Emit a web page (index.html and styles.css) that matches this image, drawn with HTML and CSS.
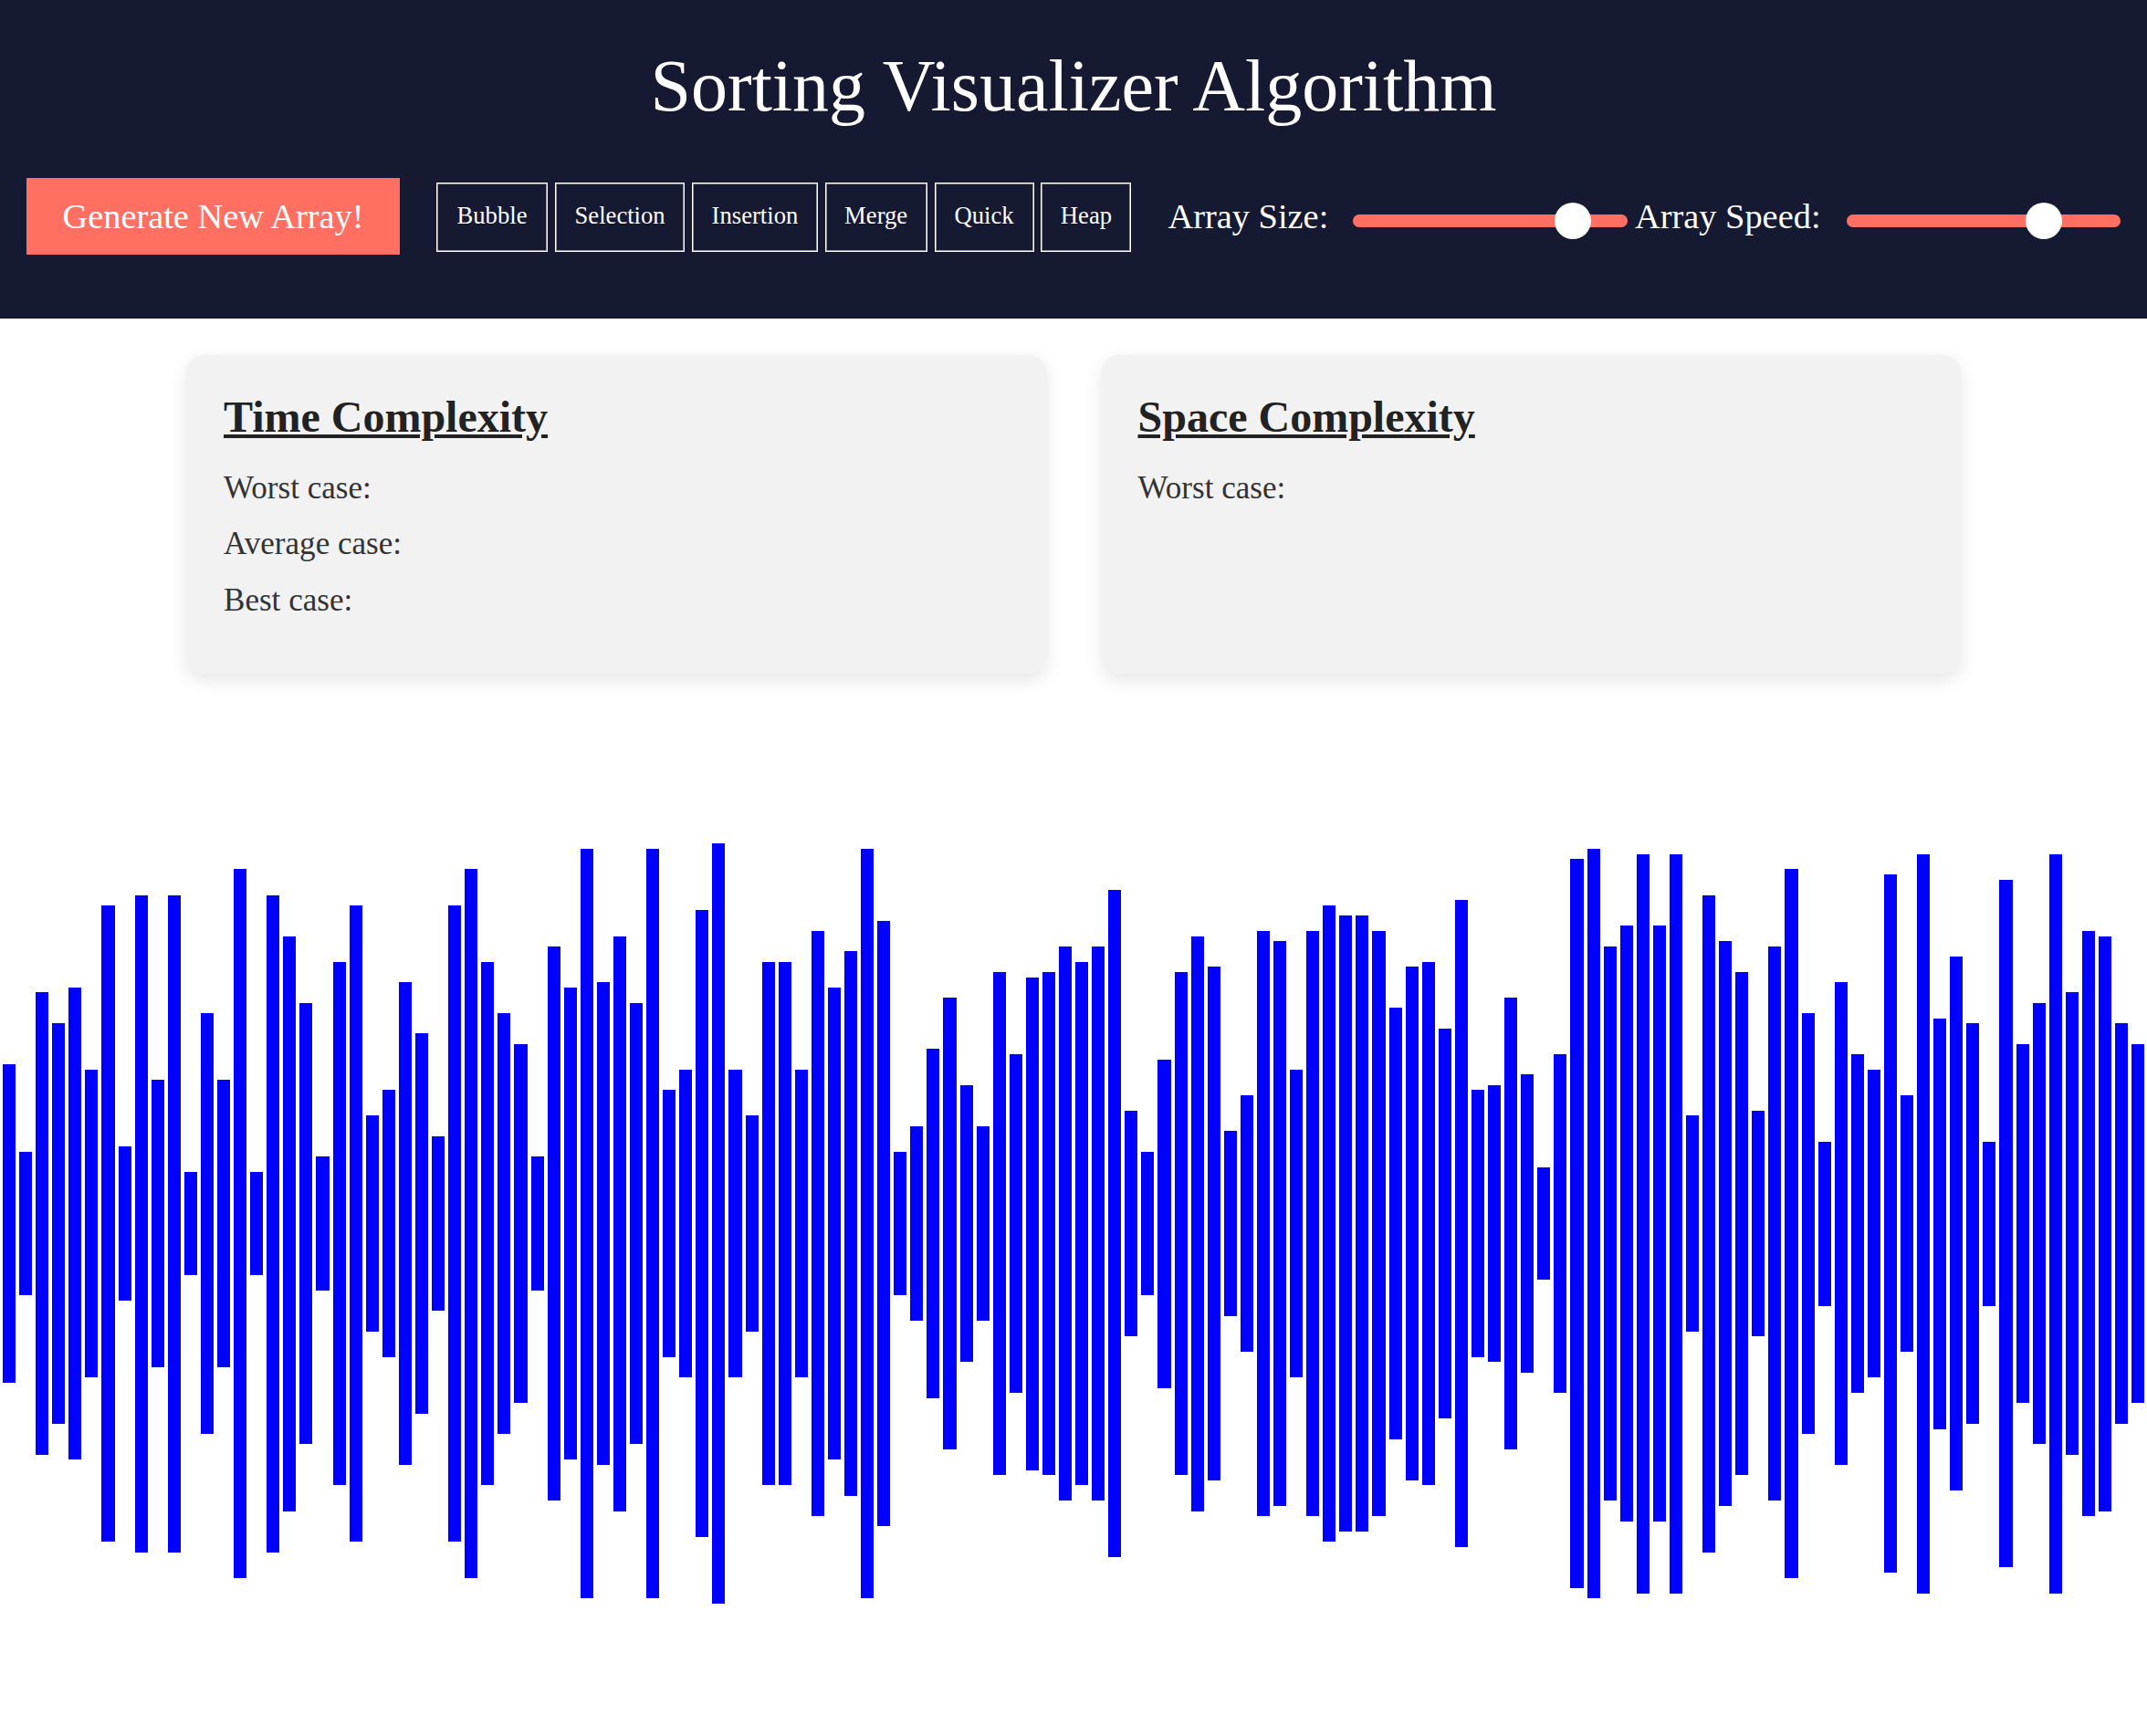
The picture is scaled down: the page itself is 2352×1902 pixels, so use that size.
FILE: index.html
```html
<!DOCTYPE html>
<html lang="en">
<head>
<meta charset="utf-8">
<title>Sorting Visualizer Algorithm</title>
<link rel="stylesheet" href="styles.css">
</head>
<body>
<header class="header">
  <h1 class="title">Sorting Visualizer Algorithm</h1>
  <nav class="toolbar">
    <button class="generate">Generate New Array!</button>
    <div class="algorithms">
      <button class="algo">Bubble</button>
      <button class="algo">Selection</button>
      <button class="algo">Insertion</button>
      <button class="algo">Merge</button>
      <button class="algo">Quick</button>
      <button class="algo">Heap</button>
    </div>
    <div class="sliders">
      <label class="label size-label" for="size">Array Size:</label>
      <input class="range" id="size" type="range" min="20" max="150" step="any" value="130.1">
      <label class="label speed-label" for="speed">Array Speed:</label>
      <input class="range" id="speed" type="range" min="0" max="100" step="any" value="75.1">
    </div>
  </nav>
</header>
<section class="cards">
  <article class="card">
    <h2 class="card-title">Time Complexity</h2>
    <p class="case">Worst case:</p>
    <p class="case">Average case:</p>
    <p class="case">Best case:</p>
  </article>
  <article class="card">
    <h2 class="card-title">Space Complexity</h2>
    <p class="case">Worst case:</p>
  </article>
</section>
<main class="bars" id="bars"></main>
<script src="script.js"></script>
</body>
</html>
```
FILE: styles.css
```css
* { box-sizing: border-box; }

body {
  margin: 0;
  background: #fff;
  font-family: "Liberation Serif", "Times New Roman", serif;
  overflow: hidden;
}

.header {
  height: 349px;
  padding-top: 47px;
  background: #161932;
  color: #fff;
}

.title {
  margin: 0;
  font-size: 80px;
  font-weight: 400;
  line-height: 94px;
  text-align: center;
}

.toolbar {
  display: flex;
  align-items: center;
  height: 84px;
  margin-top: 54px;
  padding-left: 29px;
}

.generate {
  width: 409px;
  height: 84px;
  padding: 0 0 1px;
  border: 0;
  background: #ff7062;
  color: #fff;
  font: 38.33px "Liberation Serif", "Times New Roman", serif;
}

.algorithms {
  display: grid;
  grid-template-columns: 122px 142.4px 137.6px 112px 109px 99px;
  gap: 7.9px;
  margin: 1px 0 0 40px;
}

.algo {
  height: 76px;
  padding: 0 0 2px;
  border: 1px solid #fff;
  background: transparent;
  box-shadow: inset 0 0 0 1px rgba(255, 255, 255, 0.55);
  color: #fff;
  font: 26.67px "Liberation Serif", "Times New Roman", serif;
}

.sliders {
  display: flex;
  align-items: center;
  margin-left: 40px;
}

.label {
  font-size: 38.4px;
  line-height: 44px;
  white-space: nowrap;
}

.size-label { width: 203px; }
.speed-label { width: 232px; margin-left: 8px; }

.range {
  appearance: none;
  width: 300.5px;
  height: 14px;
  margin: 10px 0 0;
  border-radius: 7px;
  background: #ff7062;
}

.range::-webkit-slider-thumb {
  appearance: none;
  width: 40px;
  height: 40px;
  border-radius: 50%;
  background: #fff;
}

.cards {
  display: flex;
  gap: 60px;
  height: 349px;
  margin: 40px 204px 0;
}

.card {
  flex: 1;
  padding: 40px 41px;
  border-radius: 20px;
  background: #f2f2f2;
  box-shadow: 0 6.67px 20px rgba(0, 0, 0, 0.1);
}

.card + .card { padding-left: 40px; }

.card-title {
  margin: 0 0 29.5px;
  color: #222;
  font-size: 48px;
  line-height: 56px;
  text-decoration: underline;
}

.case {
  margin: 0 0 21.5px;
  color: #333;
  font-size: 35.1px;
  line-height: 40px;
}

.bars {
  display: flex;
  align-items: center;
  height: 840px;
  margin-top: 182.6px;
  padding: 0 1.5px 0 1px;
}

.bar {
  flex: 1;
  margin: 0 2px;
  background: #00f;
}
```
FILE: script.js
```js
// Array values, one bar each.
const values = [
  31, 14, 45, 39, 46, 30, 62, 15, 64, 28, 64, 10, 41, 28, 69, 10, 64, 56, 43, 13,
  51, 62, 21, 26, 47, 37, 17, 62, 69, 51, 41, 35, 13, 54, 46, 73, 47, 56, 43, 73,
  26, 30, 61, 74, 30, 21, 51, 51, 30, 57, 46, 53, 73, 59, 14, 19, 34, 44, 27, 19,
  49, 33, 48, 49, 54, 51, 54, 65, 22, 14, 32, 49, 56, 50, 18, 25, 57, 55, 30, 57,
  62, 60, 60, 57, 42, 50, 51, 38, 63, 26, 27, 44, 29, 11, 33, 71, 73, 54, 58, 72,
  58, 72, 21, 64, 55, 49, 22, 54, 69, 41, 16, 47, 33, 30, 68, 25, 72, 40, 52, 39,
  16, 67, 35, 43, 72, 45, 57, 56, 39, 35
];
const unit = 11.25;
const bars = document.getElementById('bars');
for (const value of values) {
  const bar = document.createElement('div');
  bar.className = 'bar';
  bar.style.height = `${value * unit}px`;
  bars.append(bar);
}
```
